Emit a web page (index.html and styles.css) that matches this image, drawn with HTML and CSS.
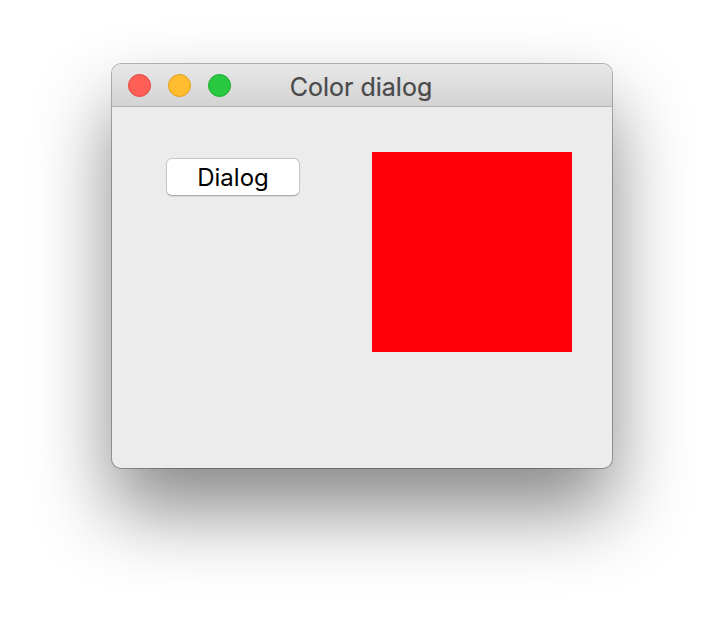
FILE: index.html
```html
<!DOCTYPE html>
<html>
<head>
<meta charset="utf-8">
<link rel="stylesheet" href="styles.css">
</head>
<body>
<div class="window">
  <div class="titlebar">
    <div class="lights">
      <span class="light red"></span>
      <span class="light yellow"></span>
      <span class="light green"></span>
    </div>
    <div class="title">Color dialog</div>
  </div>
  <div class="content">
    <button class="btn">Dialog</button>
    <div class="swatch"></div>
  </div>
</div>
</body>
</html>
```
FILE: styles.css
```css
html, body {
  margin: 0;
  padding: 0;
  background: #ffffff;
  width: 724px;
  height: 628px;
  overflow: hidden;
}
body {
  padding: 64px 0 0 112px;
  box-sizing: border-box;
  font-family: Inter, "Liberation Sans", sans-serif;
}
.window {
  width: 500px;
  height: 404px;
  border-radius: 9px;
  background: #ececec;
  box-shadow: 0 0 0 1px rgba(0,0,0,0.28), 0 42px 78px 0 rgba(0,0,0,0.47);
  overflow: hidden;
  display: flex;
  flex-direction: column;
}
.titlebar {
  height: 43px;
  flex: none;
  box-sizing: border-box;
  background: linear-gradient(#e9e8e9, #d4d3d4);
  border-bottom: 1px solid #b2b2b2;
  position: relative;
  display: flex;
  align-items: center;
  justify-content: center;
}
.lights {
  position: absolute;
  left: 16px;
  top: 10px;
  display: flex;
  gap: 17px;
}
.light {
  width: 23px;
  height: 23px;
  border-radius: 50%;
  box-sizing: border-box;
}
.red { background: #fe5f57; border: 1px solid #e2463f; }
.yellow { background: #febc2e; border: 1px solid #e1a116; }
.green { background: #28c840; border: 1px solid #1aab29; }
.title {
  font-size: 25px;
  color: #4a4a4a;
  margin-top: 3px;
  margin-left: -2px;
  -webkit-text-stroke: 0.2px #4a4a4a;
}
.content {
  flex: 1;
  display: flex;
  align-items: flex-start;
  padding: 45px 0 0 54px;
}
.btn {
  margin-top: 6px;
  width: 134px;
  height: 38px;
  background: #ffffff;
  border: 1px solid #c6c6c6;
  border-bottom-color: #acacac;
  border-radius: 6px;
  box-shadow: 0 1px 1px rgba(0,0,0,0.08);
  font-family: Inter, "Liberation Sans", sans-serif;
  font-size: 24px;
  color: #000000;
  padding: 0;
}
.swatch {
  margin-left: 72px;
  width: 200px;
  height: 200px;
  background: #ff0008;
}
```
